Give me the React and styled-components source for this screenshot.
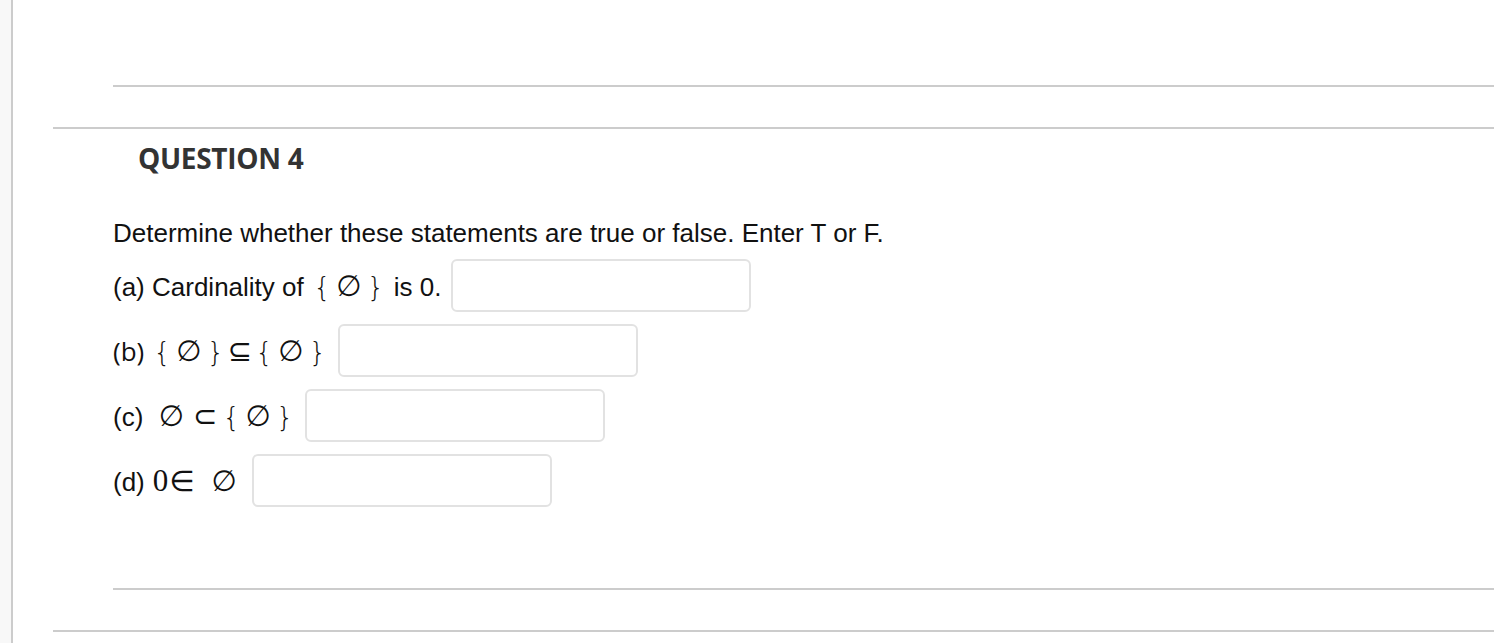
import React from "react";
import styled, { createGlobalStyle } from "styled-components";

const Global = createGlobalStyle`
  html, body { margin: 0; padding: 0; background: #fff; }
  body { font-family: "Liberation Sans", Arial, sans-serif; color: #111; }
`;

const Page = styled.div`
  display: flex;
  min-height: 643px;
  width: 1494px;
  overflow: hidden;
`;

const Sidebar = styled.div`
  width: 11px;
  flex: 0 0 11px;
  background: #f8f8f8;
  border-right: 2px solid #cccccc;
`;

const Main = styled.div`
  flex: 1;
  padding: 85px 0 0 40px;
  display: flex;
  flex-direction: column;
`;

const Rule = styled.div`
  height: 2px;
  background: #cccccc;
  margin-left: ${(p) => (p.$inset ? "60px" : "0")};
  margin-top: ${(p) => p.$top || 0}px;
`;

const Question = styled.section`
  padding: 0 0 0 60px;
`;

const Heading = styled.h2`
  margin: 11px 0 0 25px;
  font-family: "Open Sans", sans-serif;
  font-weight: 700;
  font-size: 28px;
  line-height: 36px;
  color: #333;
  letter-spacing: -0.3px;
`;

const Prompt = styled.p`
  margin: 42px 0 0 0;
  font-size: 26px;
  line-height: 30px;
`;

const Items = styled.div`
  margin-top: 11px;
  display: flex;
  flex-direction: column;
  gap: 12px;
`;

const Row = styled.div`
  display: flex;
  align-items: center;
  gap: ${(p) => p.$gap || 9}px;
`;

const Label = styled.span`
  font-size: 26px;
  font-family: ${(p) =>
    p.$alt ? '"Open Sans", sans-serif' : '"Liberation Sans", Arial, sans-serif'};
  white-space: pre;
  display: inline-flex;
  align-items: baseline;
`;

const Sym = styled.span`
  font-family: "DejaVu Sans", sans-serif;
  font-size: 29px;
  margin-left: ${(p) => p.$l ?? 3}px;
  margin-right: ${(p) => p.$r ?? 3}px;
`;

const Brace = styled.span`
  font-family: "DejaVu Sans", sans-serif;
  font-weight: 300;
  font-size: 27px;
  margin: 0 2.5px;
`;

const Serif = styled.span`
  font-family: "Liberation Serif", serif;
  font-size: 31px;
  margin-left: 8px;
`;

const Answer = styled.input`
  width: 300px;
  height: 53px;
  box-sizing: border-box;
  border: 2px solid #e2e2e2;
  border-radius: 6px;
  background: #fff;
  outline: none;
  font-size: 18px;
  padding: 0 10px;
`;

export default function App() {
  return (
    <>
      <Global />
      <Page>
        <Sidebar />
        <Main>
          <Rule $inset />
          <Rule $top={40} />
          <Question>
            <Heading>QUESTION 4</Heading>
            <Prompt>
              Determine whether these statements are true or false. Enter T or F.
            </Prompt>
            <Items>
              <Row>
                <Label>
                  (a) Cardinality of <Brace>{"{"}</Brace><Sym>∅</Sym><Brace>{"}"}</Brace> is 0.
                </Label>
                <Answer type="text" />
              </Row>
              <Row>
                <Label $alt>
                  (b) <Brace>{"{"}</Brace><Sym>∅</Sym><Brace>{"}"}</Brace><Sym $l={1} $r={1}>⊆</Sym>
                  <Brace>{"{"}</Brace><Sym>∅</Sym><Brace>{"}"}</Brace>
                </Label>
                <Answer type="text" />
              </Row>
              <Row>
                <Label>
                  (c) {" "}<Sym $l={1}>∅</Sym><Sym $l={6}>⊂</Sym><Brace>{"{"}</Brace><Sym>∅</Sym>
                  <Brace>{"}"}</Brace>
                </Label>
                <Answer type="text" />
              </Row>
              <Row $gap={12}>
                <Label>
                  (d)<Serif>0</Serif><Sym $l={1} $r={1}>∈</Sym><Sym $l={16}>∅</Sym>
                </Label>
                <Answer type="text" />
              </Row>
            </Items>
          </Question>
          <Rule $inset $top={81} />
          <Rule $top={40} />
        </Main>
      </Page>
    </>
  );
}
